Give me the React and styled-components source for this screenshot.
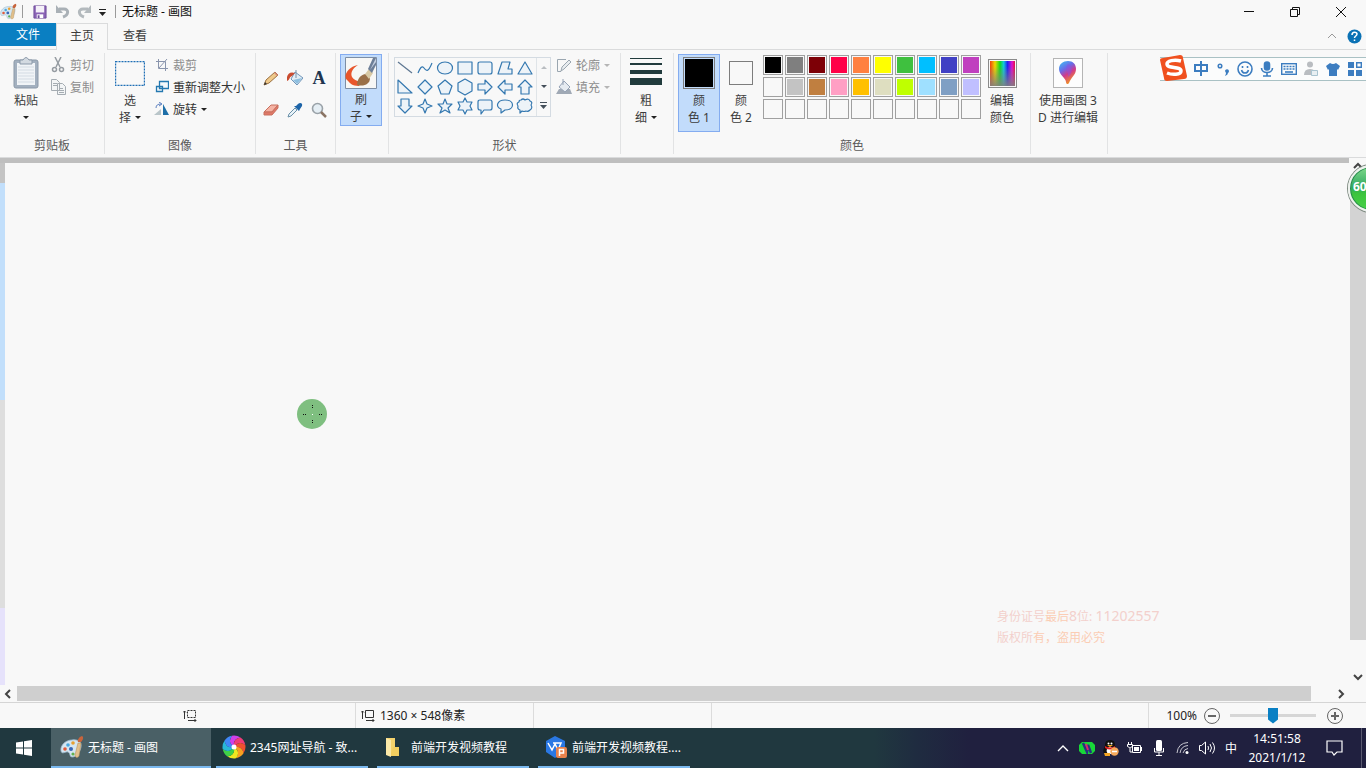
import React from "react";
import styled, { createGlobalStyle } from "styled-components";

const GlobalStyle = createGlobalStyle`
  * {
    box-sizing: border-box;
  }

  body {
    margin: 0;
    overflow: hidden;
    font-family: "Noto Sans", "Noto Sans CJK SC", sans-serif;
    font-size: 12px;
    line-height: 17px;
    color: #3c3c3c;
    background: #f8f8f8;
  }

  button {
    margin: 0;
    padding: 0;
    border: 0;
    background: none;
    font: inherit;
    color: inherit;
  }

  svg {
    display: block;
    flex-shrink: 0;
  }
`;

const SApp = styled.div`
  position: relative;
  display: flex;
  flex-direction: column;
  height: 100vh;
  overflow: hidden;
`;

/* title bar */

const STitleBar = styled.header`
  display: flex;
  align-items: center;
  height: 23px;
`;

const SQuickButton = styled.button`
  display: flex;
  align-items: center;
  justify-content: center;
  width: ${(props) => props.$width || 22}px;
  height: 22px;
`;

const SBarLine = styled.span`
  width: 1px;
  height: 13px;
  margin: 0 6px 0 5px;
  background: #9a9a9a;
`;

const STitle = styled.h1`
  flex: 1;
  margin: 0;
  font-size: 12px;
  font-weight: 400;
  color: #111;
`;

const SWindowButton = styled.button`
  display: flex;
  align-items: center;
  justify-content: center;
  width: 46px;
  height: 22px;

  &:last-child {
    margin-right: 2px;
  }
`;

/* tabs */

const STabs = styled.nav`
  display: flex;
  height: 27px;
  border-bottom: 1px solid #dadbdc;
`;

const STab = styled.button`
  width: ${(props) => (props.$file ? 56 : 52)}px;
  height: ${(props) => (props.$active ? 27 : props.$file ? 23 : 25)}px;
  margin-right: ${(props) => (props.$active ? 1 : 0)}px;
  padding-bottom: ${(props) => (props.$active ? 3 : 0)}px;
  border: ${(props) => (props.$active ? "1px solid #dadbdc" : "0")};
  border-bottom: 0;
  background: ${(props) => (props.$file ? "#0a7fc2" : "#f8f8f8")};
  color: ${(props) => (props.$file ? "#fff" : "#3c3c3c")};
`;

const STabTools = styled.div`
  display: flex;
  align-items: center;
  gap: 10px;
  margin-left: auto;
  padding-right: 4px;
`;

/* ribbon */

const SRibbon = styled.section`
  display: flex;
  height: 108px;
  padding: 3px 0;
  border-bottom: 1px solid #dadbdc;
`;

const SGroup = styled.div`
  display: flex;
  flex-direction: column;
  flex-shrink: 0;
  width: ${(props) => props.$width}px;
  border-right: 1px solid #e2e3e4;
`;

const SGroupBody = styled.div`
  display: flex;
  flex: 1;
  padding: 1px 0 0 ${(props) => props.$pad || 4}px;
`;

const SGroupName = styled.div`
  height: 17px;
  text-align: center;
  color: #5a5a5a;
`;

const SBigButton = styled.button`
  display: flex;
  flex-direction: column;
  align-items: center;
  flex-shrink: 0;
  width: ${(props) => props.$width || 42}px;
  height: ${(props) => props.$height || 78}px;
  padding-top: 2px;
  border: 1px solid ${(props) => (props.$active ? "#84acf0" : "transparent")};
  background: ${(props) => (props.$active ? "#c2dcfb" : "transparent")};
`;

const SBigIcon = styled.span`
  display: flex;
  align-items: center;
  justify-content: center;
  width: 34px;
  height: 32px;
  margin-bottom: 3px;
`;

const SSplitLine = styled.span`
  align-self: stretch;
  height: 1px;
  margin-bottom: -1px;
  background: #84acf0;
`;

const SLine = styled.span`
  display: flex;
  align-items: center;
  gap: 4px;
  height: 17px;
  white-space: nowrap;
`;

const SCommands = styled.div`
  display: flex;
  flex-direction: column;
  flex-shrink: 0;
`;

const SCommand = styled.button`
  display: flex;
  align-items: center;
  gap: 4px;
  height: 22px;
  white-space: nowrap;
  color: ${(props) => (props.disabled ? "#8d8d8d" : "#333")};
`;

const STools = styled.div`
  display: grid;
  grid-template-columns: repeat(3, 24px);
  grid-auto-rows: 32px;
  padding-top: 8px;
`;

const STool = styled.button`
  display: flex;
  align-items: center;
  justify-content: center;
  min-height: 0;
`;

const SGallery = styled.div`
  display: flex;
  width: 157px;
  height: 60px;
  margin: 3px 5px 0 0;
  border: 1px solid #d4dbe2;
`;

const SShapes = styled.div`
  display: grid;
  grid-template-columns: repeat(7, 20px);
  grid-template-rows: repeat(3, 19px);
  width: 142px;
`;

const SScrollKeys = styled.div`
  display: grid;
  grid-template-rows: repeat(3, 19px);
  width: 14px;
  border-left: 1px solid #dfe4e8;
`;

const SSwatch = styled.span`
  width: ${(props) => props.$size}px;
  height: ${(props) => props.$size}px;
  border: 1px solid #7d7d7d;
  padding: 1px;
  background: ${(props) => props.$color} content-box;
`;

const SPalette = styled.div`
  display: grid;
  grid-template-columns: repeat(10, 20px);
  grid-auto-rows: 20px;
  gap: 2px;
  margin: 1px 0 0 1px;
`;

const SColor = styled.button`
  padding: 1px;
  border: 1px solid #a0a0a0;
  background: ${(props) => props.$color || "#f8f8f8"} content-box;
`;

const SSpectrum = styled.span`
  width: 29px;
  height: 29px;
  border: 1px solid #8a8a8a;
  padding: 1px;
  background:
    linear-gradient(to bottom, transparent 20%, rgba(128, 128, 128, 0.9)) content-box,
    linear-gradient(to right, #f04010, #f0d800 20%, #10d820 40%, #10c8e0 55%, #2020f0 70%, #e010d0 88%, #e01040) content-box;
`;

const SThreeD = styled.span`
  display: flex;
  align-items: center;
  justify-content: center;
  width: 30px;
  height: 30px;
  border: 1px solid #b5b5b5;
  background: #fdfdfd;
`;

/* input method bar, floats over the ribbon */

const SIme = styled.div`
  position: absolute;
  top: 57px;
  right: 0;
  display: flex;
  align-items: center;
  height: 24px;
  padding-left: 30px;
  border: 1px solid #a9c1c4;
  border-width: 1px 0;
  background: #fbfcfc;
`;

const SImeLogo = styled.span`
  position: absolute;
  left: -1px;
  top: -4px;
`;

const SImeKey = styled.button`
  display: flex;
  align-items: center;
  justify-content: center;
  width: 22px;
  height: 22px;
  color: #3c7dc0;
`;

/* drawing area */

const SWorkspace = styled.main`
  display: grid;
  flex: 1;
  min-height: 0;
  grid-template-columns: 1fr 17px;
  grid-template-rows: 1fr 17px;
`;

const SSheet = styled.div`
  position: relative;
  display: flex;
  border-top: 5px solid #bfbfbf;
`;

const SEdge = styled.div`
  display: flex;
  flex-direction: column;
  width: 5px;
`;

const SEdgePart = styled.span`
  flex: ${(props) => props.$grow};
  background: ${(props) => props.$color};
`;

const SPointer = styled.div`
  position: absolute;
  left: 297px;
  top: 236px;
`;

const SWatermark = styled.div`
  position: absolute;
  right: 188px;
  bottom: 37px;
  width: 164px;
  line-height: 21px;
  white-space: nowrap;
  color: #f3d0cc;

  b {
    font-weight: 400;
    color: #fbcdb4;
  }

  span {
    font-size: 14px;
  }
`;

const SScrollbar = styled.div`
  display: flex;
  flex-direction: ${(props) => (props.$vertical ? "column" : "row")};
  align-items: stretch;
  padding: ${(props) => (props.$vertical ? "0 0 0 1px" : "1px 0")};
`;

const SScrollKey = styled.button`
  display: flex;
  align-items: center;
  justify-content: center;
  width: ${(props) => (props.$vertical ? 16 : 17)}px;
  height: ${(props) => (props.$vertical ? 17 : 15)}px;
`;

const SScrollThumb = styled.span`
  flex: 1;
  margin: ${(props) => (props.$vertical ? "8px 0 28px" : "0 21px 0 0")};
  background: ${(props) => (props.$vertical ? "#d3d3d3" : "#cfcfcf")};
`;

const SBall = styled.div`
  position: absolute;
  top: 165px;
  right: -29px;
  width: 47px;
  height: 47px;
  padding-left: 3px;
  border: 2px solid #eef2ee;
  border-radius: 50%;
  background: linear-gradient(to bottom, #7fd98a, #30a860 48%, #3cc43c 62%, #48d048);
  box-shadow: 0 0 0 1px #7d8a80, inset 0 0 0 1px #2a8a50;
  color: #fff;
  font-size: 12px;
  font-weight: 700;
  line-height: 40px;
`;

/* status bar */

const SStatus = styled.footer`
  display: flex;
  align-items: center;
  height: 26px;
  border-top: 1px solid #d5d5d5;
  color: #222;
`;

const SStatusCell = styled.div`
  display: flex;
  align-items: center;
  gap: 5px;
  height: 25px;
  width: ${(props) => props.$width}px;
  padding-left: 5px;
  border-right: 1px solid #dcdcdc;
`;

const SSizeIcon = styled.span`
  margin-left: ${(props) => (props.$first ? 178 : 0)}px;
`;

const SZoom = styled.div`
  display: flex;
  align-items: center;
  gap: 6px;
  height: 25px;
  margin-left: auto;
  padding: 0 22px 0 17px;
  border-left: 1px solid #dcdcdc;
`;

const SRange = styled.input`
  appearance: none;
  width: 86px;
  height: 18px;
  margin: 0 4px 0 3px;
  background: linear-gradient(#d6d6d6, #d6d6d6) center / 100% 3px no-repeat;

  &::-webkit-slider-thumb {
    appearance: none;
    width: 10px;
    height: 16px;
    background: #0a80c4;
    clip-path: polygon(0 0, 100% 0, 100% 75%, 50% 100%, 0 75%);
  }
`;

/* taskbar */

const STaskbar = styled.footer`
  display: flex;
  height: 40px;
  background: linear-gradient(to right, #20383f 0, #20383f 64%, #1f2c40 67%, #20203f 71%);
  color: #fff;
`;

const SStart = styled.button`
  display: flex;
  align-items: center;
  padding: 0 19px 0 16px;
`;

const STask = styled.button`
  display: flex;
  align-items: center;
  gap: 4px;
  width: ${(props) => (props.$active ? 160 : 152)}px;
  margin-right: ${(props) => (props.$active ? 5 : 9)}px;
  padding-left: ${(props) => (props.$active ? 9 : 6)}px;
  border-bottom: 2px solid #7ab8ee;
  background: ${(props) => (props.$active ? "#4a6066" : "transparent")};
  white-space: nowrap;
`;

const STray = styled.div`
  display: flex;
  align-items: center;
  margin-left: auto;
`;

const STrayKey = styled.button`
  display: flex;
  align-items: center;
  justify-content: center;
  width: 24px;
  height: 40px;
`;

const SClock = styled.time`
  width: 68px;
  text-align: center;
  line-height: 19px;
`;

const SNotice = styled.button`
  display: flex;
  align-items: center;
  justify-content: center;
  width: 51px;
  height: 40px;
  margin-right: 4px;
  padding-right: 4px;
  border-right: 1px solid #5a5a70;
`;

const Caret = ({ color = "#222" }) => (
  <svg width="6" height="3" viewBox="0 0 6 3">
    <path d="M0 0h6L3 3z" fill={color} />
  </svg>
);

const PaintIcon = ({ size }) => (
  <svg width={size} height={size} viewBox="0 0 24 24">
    <path d="M1 16C0 10 6 5 12 5c6-1 10 2 9 7-1 5-4 10-9 10-3 0-1-4-4-5-2-1-6 3-7-1z" fill="#d5e6f1" stroke="#9fbdd2" strokeWidth=".8" />
    <circle cx="5" cy="14" r="1.8" fill="#e05a3c" />
    <circle cx="8" cy="10" r="1.8" fill="#4aa8e0" />
    <circle cx="13" cy="8" r="1.8" fill="#e8a030" />
    <circle cx="11" cy="14" r="2" fill="#3968b8" />
    <circle cx="13" cy="19" r="1.6" fill="#60b050" />
    <path d="M18 8l3 0-2 13c-1 2-4 2-4-1z" fill="#e2c08c" stroke="#b89460" strokeWidth=".6" />
    <path d="M18 7c-1-2 1-5 4-6 2 1 1 4-1 6z" fill="#c8643c" />
  </svg>
);

const shapePaths = [
  "M3 4l14 11",
  "M3 15c2-5 4-8 6-5s4 5 8-5",
  "M10 4c10 0 10 12 0 12S0 4 10 4z",
  "M3 4h14v12H3z",
  "M5 4h10q2 0 2 2v8q0 2-2 2H5q-2 0-2-2V6q0-2 2-2z",
  "M3 16l4-12h8l-2 7h4v5z",
  "M10 4l7 12H3z",
  "M3 3l14 13H3z",
  "M10 3l7 7-7 7-7-7z",
  "M10 3l7 6-3 8H6L3 9z",
  "M10 2l7 4v8l-7 4-7-4V6z",
  "M3 7h7V3l7 7-7 7v-4H3z",
  "M17 7h-7V3l-7 7 7 7v-4h7z",
  "M10 3l7 7h-3v7H6v-7H3z",
  "M10 17l-7-7h3V3h8v7h3z",
  "M10 3l2 5 5 2-5 2-2 5-2-5-5-2 5-2z",
  "M10 3l2 5h5l-4 4 2 5-5-3-5 3 2-5-4-4h5z",
  "M10 2l2 4h5l-2 4 2 4h-5l-2 4-2-4H3l2-4-2-4h5z",
  "M5 4h10q2 0 2 2v6q0 2-2 2H9l-3 4v-4H5q-2 0-2-2V6q0-2 2-2z",
  "M10 4c10 0 10 10 0 10l-4 3v-4C0 11 2 4 10 4z",
  "M6 4q2-2 4 0 4-2 5 1 3 1 1 4 2 3-1 5-2 2-4 1-2 1-4 0l-2 2v-3q-3-1-2-4-2-3 1-4 0-2 2-2z",
];

const Shape = ({ d, index }) => (
  <svg width="20" height="20" viewBox="0 0 20 20">
    <path
      d={d}
      fill={index < 2 ? "none" : "#edf3f8"}
      stroke={index === 0 ? "#5c7590" : "#3478b0"}
      strokeWidth="1.2"
      strokeLinejoin="round"
    />
  </svg>
);

const toolIcons = [
  {
    name: "铅笔",
    icon: (
      <>
        <path d="M1 15l2-5 9-8 3 3-9 8z" fill="#efc98a" stroke="#9b7040" />
        <path d="M11 3l1-1 3 3-1 1z" fill="#d88878" />
        <path d="M1 15l1-3 2 2z" fill="#333" />
      </>
    ),
  },
  {
    name: "用颜色填充",
    icon: (
      <>
        <path d="M8 2l8 6-6 7-6-6z" fill="#e2edf5" stroke="#6f94b8" />
        <path d="M15 8l-5 6-4-4z" fill="#8dbfe0" />
        <path d="M9 0v8" stroke="#7890a8" fill="none" />
        <path d="M8 3C3 1-1 4 0 11c3-1 2-4 5-5z" fill="#c94b30" />
      </>
    ),
  },
  { name: "文本", letter: "A" },
  {
    name: "橡皮擦",
    icon: (
      <>
        <path d="M1 10l7-7h7l-6 7z" fill="#f5b3a4" stroke="#c8705f" />
        <path d="M1 10h8l6-7v3l-6 7H1z" fill="#e07868" stroke="#c8705f" />
      </>
    ),
  },
  {
    name: "颜色选取器",
    icon: (
      <>
        <path d="M1 15l1-3 6-6 2 2-6 6z" fill="#e8f2f8" stroke="#6a90a8" />
        <path d="M7 4l5 5 1-2 2-3c1-3-2-4-4-2L9 4z" fill="#1d64a8" />
      </>
    ),
  },
  {
    name: "放大镜",
    icon: (
      <>
        <circle cx="6.5" cy="6.5" r="5" fill="#e5eef4" stroke="#9aa2a8" strokeWidth="1.6" />
        <path d="M10 10l5 5" stroke="#8a7464" strokeWidth="2.5" />
      </>
    ),
  },
];

const STextTool = styled.span`
  font-family: "Liberation Serif", serif;
  font-size: 18px;
  font-weight: 700;
  color: #20354f;
`;

const colors = [
  "#000000", "#7f7f7f", "#7d0006", "#ff0048", "#ff8040", "#ffff00", "#3fc03f", "#00bfff", "#4040c4", "#c03fbf",
  "", "#c3c3c3", "#c07f40", "#ff9fc4", "#ffc000", "#dedec0", "#bfff00", "#9fe0ff", "#7f9fc4", "#c0bfff",
  "", "", "", "", "", "", "", "", "", "",
];

const SizeIcon = ({ dashed }) => (
  <svg width="14" height="14" viewBox="0 0 14 14" fill="none" stroke="#333">
    <path d="M1.5 10V2M0 3.500L1.500 2 3 3.500M5 11.500h8M11.500 10l1.500 1.500-1.500 1.500" />
    <path d="M4.500 1.500h8v7h-8z" strokeDasharray={dashed ? "2 1" : "none"} />
  </svg>
);

const Arrow = ({ d, color = "#444", width = 2 }) => (
  <svg width="10" height="10" viewBox="0 0 10 10">
    <path d={d} fill="none" stroke={color} strokeWidth={width} />
  </svg>
);

const TitleBar = () => (
  <STitleBar>
    <PaintIcon size={17} />
    <SBarLine />
    <SQuickButton aria-label="保存">
      <svg width="14" height="14" viewBox="0 0 15 15">
        <path d="M1 1h13v13H1z" fill="#8a63b5" stroke="#6d4b9a" />
        <path d="M3 1h9v7H3z" fill="#f4f0f8" />
        <path d="M4 10h7v4H4z" fill="#fff" />
        <path d="M5 11h2v3H5z" fill="#6d4b9a" />
      </svg>
    </SQuickButton>
    <SQuickButton aria-label="撤消" disabled>
      <svg width="15" height="15" viewBox="0 0 15 15">
        <path d="M4 5h5c5 0 5 6-1 8" fill="none" stroke="#a9b0b6" strokeWidth="3" />
        <path d="M1 1v8h7z" fill="#a9b0b6" />
      </svg>
    </SQuickButton>
    <SQuickButton aria-label="重做" disabled>
      <svg width="15" height="15" viewBox="0 0 15 15">
        <path d="M11 5H6c-5 0-5 6 1 8" fill="none" stroke="#b3b9bd" strokeWidth="3" />
        <path d="M14 1v8H7z" fill="#b3b9bd" />
      </svg>
    </SQuickButton>
    <SQuickButton $width={15} aria-label="自定义快速访问工具栏">
      <svg width="7" height="8" viewBox="0 0 7 8">
        <path d="M0 4h7L3.500 8z" fill="#222" />
        <path d="M0 1.500h7" stroke="#222" />
      </svg>
    </SQuickButton>
    <SBarLine />
    <STitle>无标题 - 画图</STitle>
    <SWindowButton aria-label="最小化">
      <svg width="10" height="10"><path d="M0 4.500h10" stroke="#111" /></svg>
    </SWindowButton>
    <SWindowButton aria-label="还原">
      <svg width="10" height="10" fill="none" stroke="#111">
        <path d="M.5 2.500h7v7h-7zM2.500 2.500v-2h7v7h-2" />
      </svg>
    </SWindowButton>
    <SWindowButton aria-label="关闭">
      <svg width="10" height="10"><path d="M0 0l10 10M10 0L0 10" stroke="#111" /></svg>
    </SWindowButton>
  </STitleBar>
);

const ClipboardGroup = () => (
  <SGroup $width={105}>
    <SGroupBody $pad={5}>
      <SBigButton>
        <SBigIcon>
          <svg width="26" height="32" viewBox="0 0 26 32">
            <rect x="1" y="3" width="24" height="28" rx="2" fill="#a3b0bf" stroke="#8b99a9" />
            <path d="M4 6h18v22H4z" fill="#f1f4f7" />
            <path d="M5 10h16M5 13h16M5 16h16M5 19h16M5 22h16M5 25h16" stroke="#d3dbe3" />
            <path d="M7 3h3q3-5 6 0h3v4H7z" fill="#d3dae1" stroke="#8b99a9" />
          </svg>
        </SBigIcon>
        <SLine>粘贴</SLine>
        <SLine><Caret /></SLine>
      </SBigButton>
      <SCommands>
        <SCommand disabled>
          <svg width="19" height="16" viewBox="-4 0 19 16" fill="none" stroke="#969ca2" strokeWidth="1.500">
            <path d="M4 0l5 10M10 0L5 10" />
            <circle cx="3.500" cy="12.500" r="2" />
            <circle cx="10.500" cy="12.500" r="2" />
          </svg>
          剪切
        </SCommand>
        <SCommand disabled>
          <svg width="19" height="16" viewBox="-4 0 19 16" fill="#f3f5f6" stroke="#a5acb2">
            <path d="M.5.500h5l3 3v8h-8zM6.500 4.500h5l3 3v8h-8z" />
            <path d="M2 4.500h4M2 6.500h4M8 9.500h4M8 11.500h5M8 13.500h5" />
          </svg>
          复制
        </SCommand>
      </SCommands>
    </SGroupBody>
    <SGroupName>剪贴板</SGroupName>
  </SGroup>
);

const ImageGroup = () => (
  <SGroup $width={151}>
    <SGroupBody>
      <SBigButton>
        <SBigIcon>
          <svg width="30" height="25" viewBox="0 0 30 25">
            <path d="M.5.5h29v24H.5z" fill="none" stroke="#1f6fb5" strokeWidth="1.400" strokeDasharray="2 1" />
          </svg>
        </SBigIcon>
        <SLine>选</SLine>
        <SLine>择<Caret /></SLine>
      </SBigButton>
      <SCommands>
        <SCommand disabled>
          <svg width="18" height="14" viewBox="-5 0 18 14" fill="none" stroke="#8a95ad">
            <path d="M2.500 1v9.500H12M0 3.500h9.500V13M3 10l8-9" />
          </svg>
          裁剪
        </SCommand>
        <SCommand>
          <svg width="18" height="14" viewBox="-5 0 18 14" fill="#f4f8fb" stroke="#2478b0">
            <path d="M3.500 1.500h9v7h-9zM.5 6.500h6v5h-6z" strokeWidth="1.300" />
          </svg>
          重新调整大小
        </SCommand>
        <SCommand>
          <svg width="18" height="14" viewBox="-4 0 18 14">
            <path d="M6 7v6H-1z" fill="#b9c5c9" />
            <path d="M8 2v11h6z" fill="#1e6fa8" />
            <path d="M1 6c0-3 2-4 5-4M4 0l3 2-3 2" fill="none" stroke="#5c80c0" />
          </svg>
          旋转<Caret />
        </SCommand>
      </SCommands>
    </SGroupBody>
    <SGroupName>图像</SGroupName>
  </SGroup>
);

const ToolGroup = () => (
  <SGroup $width={80}>
    <SGroupBody $pad={3}>
      <STools>
        {toolIcons.map((tool) => (
          <STool key={tool.name} aria-label={tool.name}>
            {tool.letter ? (
              <STextTool>{tool.letter}</STextTool>
            ) : (
              <svg width="16" height="16" viewBox="0 0 16 16">{tool.icon}</svg>
            )}
          </STool>
        ))}
      </STools>
    </SGroupBody>
    <SGroupName>工具</SGroupName>
  </SGroup>
);

const BrushGroup = () => (
  <SGroup $width={53}>
    <SGroupBody>
      <SBigButton $active $height={72}>
        <SBigIcon>
          <svg width="32" height="32" viewBox="0 0 32 32">
            <path d="M.5.5h31v31H.5z" fill="#f7f7f5" stroke="#7d8ea5" />
            <path d="M13 8C2 10-2 20 2 23c3 3 5 6 12 6l3-5c-4 1-8-1-10-4-2-4 1-9 6-12z" fill="#e8562c" />
            <path d="M12 28c0-6 4-11 9-11l4 4c0 6-6 9-13 7z" fill="#9a7048" />
            <path d="M20 17l4-5 4 4-4 6z" fill="#d8c9a4" />
            <path d="M23 12l5-11h3v7l-4 8z" fill="#6d7f98" />
            <path d="M25 13l6-12v4z" fill="#c5d0df" />
          </svg>
        </SBigIcon>
        <SSplitLine />
        <SLine>刷</SLine>
        <SLine>子<Caret /></SLine>
      </SBigButton>
    </SGroupBody>
  </SGroup>
);

const ShapeGroup = () => (
  <SGroup $width={232}>
    <SGroupBody $pad={5}>
      <SGallery>
        <SShapes>
          {shapePaths.map((d, index) => (
            <STool key={d} aria-label={`形状 ${index + 1}`}>
              <Shape d={d} index={index} />
            </STool>
          ))}
        </SShapes>
        <SScrollKeys>
          <STool aria-label="向上">
            <svg width="6" height="3"><path d="M0 3h6L3 0z" fill="#b9bdc1" /></svg>
          </STool>
          <STool aria-label="向下"><Caret color="#444f5a" /></STool>
          <STool aria-label="更多">
            <svg width="7" height="7" viewBox="0 0 7 7">
              <path d="M0 .5h7" stroke="#444f5a" />
              <path d="M0 3h7L3.500 7z" fill="#444f5a" />
            </svg>
          </STool>
        </SScrollKeys>
      </SGallery>
      <SCommands>
        <SCommand disabled>
          <svg width="16" height="16" viewBox="0 0 16 16" fill="none" stroke="#9aa6b0">
            <path d="M10 2.500H1.500v12H5" />
            <path d="M5 14l1-4 7-7 2 2-7 7z" fill="#e8ecef" />
          </svg>
          轮廓<Caret color="#b5b5b5" />
        </SCommand>
        <SCommand disabled>
          <svg width="16" height="16" viewBox="0 0 16 16">
            <path d="M0 15l3-5h11l2 5z" fill="#a0a9b5" />
            <path d="M8 2l6 6-5 5-6-5z" fill="#e6ebf1" stroke="#95a2b5" />
            <path d="M7 0v6" stroke="#95a2b5" />
          </svg>
          填充<Caret color="#b5b5b5" />
        </SCommand>
      </SCommands>
    </SGroupBody>
    <SGroupName>形状</SGroupName>
  </SGroup>
);

const WidthGroup = () => (
  <SGroup $width={53}>
    <SGroupBody>
      <SBigButton>
        <SBigIcon>
          <svg width="32" height="30" viewBox="0 0 32 30" fill="#213b3d">
            <path d="M0 0h32v1H0zM0 5h32v2H0zM0 12h32v4H0zM0 20h32v7H0z" />
          </svg>
        </SBigIcon>
        <SLine>粗</SLine>
        <SLine>细<Caret /></SLine>
      </SBigButton>
    </SGroupBody>
  </SGroup>
);

const ColorGroup = () => (
  <SGroup $width={357}>
    <SGroupBody>
      <SBigButton $active>
        <SBigIcon><SSwatch $size={32} $color="#000" /></SBigIcon>
        <SLine>颜</SLine>
        <SLine>色 1</SLine>
      </SBigButton>
      <SBigButton>
        <SBigIcon><SSwatch $size={24} $color="#f8f8f8" /></SBigIcon>
        <SLine>颜</SLine>
        <SLine>色 2</SLine>
      </SBigButton>
      <SPalette>
        {colors.map((color, index) => (
          <SColor key={index} $color={color} aria-label={color || "空"} />
        ))}
      </SPalette>
      <SBigButton>
        <SBigIcon><SSpectrum /></SBigIcon>
        <SLine>编辑</SLine>
        <SLine>颜色</SLine>
      </SBigButton>
    </SGroupBody>
    <SGroupName>颜色</SGroupName>
  </SGroup>
);

const ThreeDGroup = () => (
  <SGroup $width={77}>
    <SGroupBody>
      <SBigButton $width={66}>
        <SBigIcon>
          <SThreeD>
            <svg width="20" height="26" viewBox="0 0 20 26">
              <defs>
                <linearGradient id="drop" x1="0" y1="0" x2=".5" y2="1">
                  <stop offset="0" stopColor="#38c6f4" />
                  <stop offset=".4" stopColor="#6a6ae8" />
                  <stop offset=".65" stopColor="#d03a8c" />
                  <stop offset="1" stopColor="#f09028" />
                </linearGradient>
              </defs>
              <path d="M10 1c5 0 8 3 8 8 0 6-5 8-7 14-1 2-3 1-3-1 0-4-7-7-7-13 0-5 4-8 9-8z" fill="url(#drop)" />
              <path d="M10 4c5 2 5 9 0 13 1-5-4-8 0-13z" fill="#8c4fe0" opacity=".5" />
            </svg>
          </SThreeD>
        </SBigIcon>
        <SLine>使用画图 3</SLine>
        <SLine>D 进行编辑</SLine>
      </SBigButton>
    </SGroupBody>
  </SGroup>
);

const ImeBar = () => (
  <SIme>
    <SImeLogo>
      <svg width="29" height="29" viewBox="0 0 29 29">
        <path d="M1 6q0-2 3-2l17-3q3 0 3 3l4 18q0 3-3 3L8 27q-3 0-3-3z" fill="#f0501e" />
        <path d="M22 7C15 5 8 7 8 10c0 5 14 2 14 7 0 4-9 4-14 2" fill="none" stroke="#fff" strokeWidth="3.500" />
      </svg>
    </SImeLogo>
    <SImeKey aria-label="中文">
      <svg width="16" height="16" fill="none" stroke="currentColor" strokeWidth="2">
        <path d="M2 4h12v6H2zM8 0v15" />
      </svg>
    </SImeKey>
    <SImeKey aria-label="标点">
      <svg width="14" height="14" fill="none" stroke="currentColor">
        <circle cx="4" cy="4" r="1.800" strokeWidth="1.500" />
        <path d="M9 9a2 2 0 1 1 3 2q0 2-3 3 1-2 1-3z" fill="currentColor" stroke="none" />
      </svg>
    </SImeKey>
    <SImeKey aria-label="表情">
      <svg width="16" height="16" fill="none" stroke="currentColor" strokeWidth="1.600">
        <circle cx="8" cy="8" r="7" />
        <path d="M4.500 9c1 4 6 4 7 0M5.500 5v2M10.500 5v2" />
      </svg>
    </SImeKey>
    <SImeKey aria-label="语音">
      <svg width="14" height="16" fill="none" stroke="currentColor" strokeWidth="1.600">
        <rect x="4.500" y="1" width="5" height="8" rx="2.500" fill="currentColor" />
        <path d="M1.500 7c0 6 11 6 11 0M7 12v3M3 15h8" />
      </svg>
    </SImeKey>
    <SImeKey aria-label="软键盘">
      <svg width="16" height="12" fill="none" stroke="currentColor">
        <rect x=".7" y=".7" width="14.600" height="10.600" strokeWidth="1.400" />
        <path d="M2.500 3.500h11M2.500 6h11" strokeWidth="1.600" strokeDasharray="2 1" />
        <path d="M4 9h8" strokeWidth="1.600" />
      </svg>
    </SImeKey>
    <SImeKey aria-label="登录">
      <svg width="16" height="16" fill="#b9bdc1">
        <circle cx="7" cy="3.500" r="3" />
        <path d="M1 14q0-6 6-6 3 0 5 2v4z" />
        <path d="M8.500 9.500h6v5h-6z" fill="#e8eff2" stroke="#a9c4d0" />
      </svg>
    </SImeKey>
    <SImeKey aria-label="皮肤">
      <svg width="14" height="14" fill="currentColor">
        <path d="M4 1q3 2 6 0l4 3-2 4-1-1v7H3V7L2 8 0 4z" />
      </svg>
    </SImeKey>
    <SImeKey aria-label="工具箱">
      <svg width="14" height="14" fill="currentColor">
        <path d="M0 0h6v6H0zM0 8h6v6H0zM8 8h6v6H8z" />
        <path d="M8.700.7h4.600v4.600H8.700z" fill="none" stroke="currentColor" strokeWidth="1.400" />
      </svg>
    </SImeKey>
  </SIme>
);

const Workspace = () => (
  <SWorkspace>
    <SSheet>
      <SEdge>
        <SEdgePart $grow={20} $color="#c4c4c4" />
        <SEdgePart $grow={217} $color="#c2dffb" />
        <SEdgePart $grow={208} $color="#dedede" />
        <SEdgePart $grow={77} $color="#e6e2fb" />
      </SEdge>
      <SPointer>
        <svg width="30" height="30">
          <circle cx="15" cy="15" r="15" fill="#7fbf80" />
          <path d="M15.500 6v4M15.500 21v4M6 15.500h4M22 15.500h4" stroke="#111" strokeDasharray="1 1" />
          <path d="M15 15h1v1h-1z" fill="#fff" />
        </svg>
      </SPointer>
      <SWatermark>
        身份证号<b>最后</b><span>8</span>位: <span>11202557</span>
        <br />
        版权所<b>有，盗用必究</b>
      </SWatermark>
    </SSheet>
    <SScrollbar $vertical>
      <SScrollKey $vertical aria-label="向上滚动"><Arrow d="M1 6l4-4 4 4" /></SScrollKey>
      <SScrollThumb $vertical />
      <SScrollKey $vertical aria-label="向下滚动"><Arrow d="M1 3l4 4 4-4" /></SScrollKey>
    </SScrollbar>
    <SScrollbar>
      <SScrollKey aria-label="向左滚动"><Arrow d="M6 1L2 5l4 4" /></SScrollKey>
      <SScrollThumb />
      <SScrollKey aria-label="向右滚动"><Arrow d="M3 1l4 4-4 4" /></SScrollKey>
    </SScrollbar>
  </SWorkspace>
);

const StatusBar = () => (
  <SStatus>
    <SStatusCell $width={356}>
      <SSizeIcon $first><SizeIcon dashed /></SSizeIcon>
    </SStatusCell>
    <SStatusCell $width={178}>
      <SSizeIcon><SizeIcon /></SSizeIcon>
      1360 × 548像素
    </SStatusCell>
    <SStatusCell $width={178} />
    <SZoom>
      <label htmlFor="zoom">100%</label>
      <button aria-label="缩小">
        <svg width="18" height="18" fill="none" stroke="#666">
          <circle cx="9" cy="9" r="7.500" />
          <path d="M5 9h8" strokeWidth="2" />
        </svg>
      </button>
      <SRange id="zoom" type="range" min="0" max="100" defaultValue="50" />
      <button aria-label="放大">
        <svg width="18" height="18" fill="none" stroke="#666">
          <circle cx="9" cy="9" r="7.500" />
          <path d="M5 9h8M9 5v8" strokeWidth="2" />
        </svg>
      </button>
    </SZoom>
  </SStatus>
);

const wheelColors = ["#d040e8", "#f03c78", "#f05030", "#f8a020", "#f0e820", "#40d048", "#28b8d8", "#4088f8"];

const Taskbar = () => (
  <STaskbar>
    <SStart aria-label="开始">
      <svg width="16" height="16" fill="#fff">
        <path d="M0 2.500l7-1v6H0zM8 1.300L16 0v7.500H8zM0 8.500h7v6l-7-1zM8 8.500h8V16l-8-1.300z" />
      </svg>
    </SStart>
    <STask $active>
      <PaintIcon size={24} />
      无标题 - 画图
    </STask>
    <STask>
      <svg width="24" height="24" viewBox="-12 -12 24 24">
        {wheelColors.map((color, index) => (
          <path
            key={color}
            d="M0 0Q-6-6 0-11.500A11.500 11.500 0 0 1 8.100-8.100Q0-8.500 0 0z"
            fill={color}
            transform={`rotate(${index * 45 - 10})`}
          />
        ))}
        <circle r="2.500" fill="#fff" />
      </svg>
      2345网址导航 - 致...
    </STask>
    <STask>
      <svg width="24" height="24">
        <path d="M3 3h9v17H3z" fill="#f5d36c" />
        <path d="M10 12h6v9H7z" fill="#f3cf60" />
        <path d="M3 3l5 2v17l-5-2z" fill="#fbe9a8" />
      </svg>
      前端开发视频教程
    </STask>
    <STask>
      <svg width="24" height="24" fill="none">
        <path d="M11 1l10 5v11l-10 6-9-6V6z" fill="#2a78e4" />
        <path d="M4 8l4 7 3-6 3 6 3-7H9" stroke="#fff" strokeWidth="1.500" />
        <rect x="12" y="12" width="11" height="11" rx="2" fill="#e8824c" />
        <path d="M15.500 21v-6.500h4v3.500h-4" stroke="#fff" strokeWidth="1.500" />
      </svg>
      前端开发视频教程....
    </STask>
    <STray>
      <STrayKey aria-label="显示隐藏的图标">
        <svg width="12" height="8"><path d="M1 7l5-5 5 5" fill="none" stroke="#fff" strokeWidth="1.400" /></svg>
      </STrayKey>
      <STrayKey aria-label="录屏">
        <svg width="16" height="12">
          <path d="M3 0h10l3 3v6l-3 3H3L0 9V3z" fill="#18d838" />
          <path d="M4 1l4 9 1-7 3 8" fill="none" stroke="#283080" strokeWidth="2.500" />
          <path d="M7 2l2 6" stroke="#e02868" strokeWidth="2" />
        </svg>
      </STrayKey>
      <STrayKey aria-label="QQ">
        <svg width="16" height="16">
          <path d="M7 0c5 0 5 4 5 6 4 5 2 8-1 8H3c-4 0-3-5-1-8 0-2 0-6 5-6z" fill="#111" />
          <path d="M7 7c4 0 5 7 0 7s-4-7 0-7z" fill="#fff" />
          <path d="M2 6q5 3 10 0v2Q7 11 2 8z" fill="#e02020" />
          <circle cx="5.500" cy="3.500" r="1" fill="#fff" />
          <circle cx="8.500" cy="3.500" r="1" fill="#fff" />
          <path d="M4 5h6L7 7zM1 13h6v3H2z" fill="#f5a623" />
          <circle cx="11.500" cy="11.500" r="4.200" fill="#f6a95c" />
          <path d="M9 11.500h5" stroke="#fff" strokeWidth="1.500" />
        </svg>
      </STrayKey>
      <STrayKey aria-label="电池">
        <svg width="16" height="12" fill="none" stroke="#fff">
          <path d="M5.500 3.500h8v7h-8zM14.500 5v4" />
          <path d="M7 5h5v4H7z" fill="#fff" stroke="none" />
          <path d="M1.500 0v2M4.500 0v2M.5 2.500h5v2l-2 1h-1l-2-1zM3 6v4h2" />
        </svg>
      </STrayKey>
      <STrayKey aria-label="麦克风">
        <svg width="12" height="16" fill="none" stroke="#fff">
          <rect x="3" y="0" width="6" height="11" rx="1.500" fill="#fff" stroke="none" />
          <path d="M1.500 8v4h9V8M6 12v3M3 15.500h6" />
        </svg>
      </STrayKey>
      <STrayKey aria-label="网络">
        <svg width="14" height="14" fill="none" stroke="#fff">
          <path d="M1 12Q2 2 12 1.500M4 12q1-7 8-7.500M7 12q1-4 5-4.500" stroke="#c9c9d2" />
          <circle cx="11" cy="11.500" r="1.500" fill="#fff" stroke="none" />
        </svg>
      </STrayKey>
      <STrayKey aria-label="音量">
        <svg width="17" height="14" fill="none" stroke="#fff">
          <path d="M.5 4.500h2l4-3.500v12l-4-3.500h-2zM9 5q1 2 0 4M11 3q3 4 0 8M13.500 1.500q4 5.500 0 11" />
        </svg>
      </STrayKey>
      <STrayKey>中</STrayKey>
      <SClock>
        14:51:58
        <br />
        2021/1/12
      </SClock>
      <SNotice aria-label="通知">
        <svg width="17" height="16" fill="none" stroke="#fff" strokeWidth="1.200">
          <path d="M1 1h15v11h-5l-3 3-2-3H1z" />
        </svg>
      </SNotice>
    </STray>
  </STaskbar>
);

const App = () => {
  return (
    <>
      <GlobalStyle />
      <SApp>
        <TitleBar />
        <STabs>
          <STab $file>文件</STab>
          <STab $active>主页</STab>
          <STab>查看</STab>
          <STabTools>
            <Arrow d="M1 7l4-4 4 4" color="#999" width={1} />
            <svg width="15" height="15" viewBox="0 0 15 15">
              <circle cx="7.500" cy="7.500" r="7" fill="#0b72b5" />
              <path d="M5 6c0-4 5-3 5-1 0 2-2.500 2-2.500 4M7.500 10.500v1.500" fill="none" stroke="#fff" strokeWidth="1.500" />
            </svg>
          </STabTools>
        </STabs>
        <SRibbon>
          <ClipboardGroup />
          <ImageGroup />
          <ToolGroup />
          <BrushGroup />
          <ShapeGroup />
          <WidthGroup />
          <ColorGroup />
          <ThreeDGroup />
        </SRibbon>
        <Workspace />
        <StatusBar />
        <Taskbar />
        <ImeBar />
        <SBall>60</SBall>
      </SApp>
    </>
  );
};

export default App;
